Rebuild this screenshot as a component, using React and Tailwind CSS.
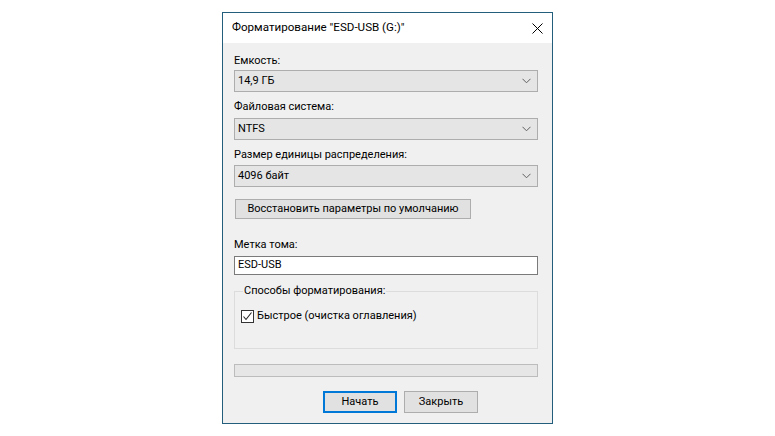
import React from "react";

const font = { fontFamily: 'Roboto, "Liberation Sans", Arial, sans-serif' };

function Chevron() {
  return (
    <svg width="9" height="6" viewBox="0 0 9 6" className="block">
      <path d="M0.5 0.8 L4.5 4.8 L8.5 0.8" fill="none" stroke="#606060" strokeWidth="1" />
    </svg>
  );
}

function Combo({ value }) {
  return (
    <div className="h-[22px] w-[304px] border border-[#adadad] bg-[#e5e5e5] flex items-center justify-between pl-[3px] pr-[6px] text-[11px] text-black">
      <span>{value}</span>
      <Chevron />
    </div>
  );
}

function Label({ children, className = "" }) {
  return <div className={"h-[16px] leading-[16px] text-[11px] text-black " + className}>{children}</div>;
}

export default function App() {
  return (
    <div className="w-[775px] h-[436px] bg-white flex items-center justify-center" style={font}>
      <div className="w-[331px] h-[412px] border border-[#235f7d] bg-[#f0f0f0] flex flex-col">
        <div className="h-[30px] bg-white flex items-center justify-between pl-[9px] pr-[9px] shrink-0">
          <span className="text-[11.6px] text-black">Форматирование "ESD-USB (G:)"</span>
          <svg width="11" height="11" viewBox="0 0 11 11" className="block">
            <path d="M0.5 0.5 L10.5 10.5 M10.5 0.5 L0.5 10.5" stroke="#000" strokeWidth="1" />
          </svg>
        </div>
        <div className="flex flex-col pl-[11px] pr-[14px]">
          <Label className="mt-[10px]">Емкость:</Label>
          <div className="mt-[1px]"><Combo value="14,9 ГБ" /></div>
          <Label className="mt-[7px]">Файловая система:</Label>
          <div className="mt-[3px]"><Combo value="NTFS" /></div>
          <Label className="mt-[7px]">Размер единицы распределения:</Label>
          <div className="mt-[2px]"><Combo value="4096 байт" /></div>
          <div className="mt-[12px] ml-[1px] h-[20px] w-[236px] border border-[#adadad] bg-[#e1e1e1] flex items-center justify-center text-[11px] text-black">
            Восстановить параметры по умолчанию
          </div>
          <Label className="mt-[18px]">Метка тома:</Label>
          <div className="mt-[3px] h-[19px] w-[304px] border border-[#7a7a7a] bg-white flex items-center pl-[3px] text-[11px] text-black">
            ESD-USB
          </div>
          <div className="relative mt-[16px] h-[58px] w-[304px] border border-[#dcdcdc]">
            <span className="absolute left-[8px] top-[-9px] bg-[#f0f0f0] px-[1px] leading-[16px] text-[11px] text-black">
              Способы форматирования:
            </span>
            <div className="absolute left-[6px] top-[16px] flex items-center gap-[3px]">
              <div className="w-[13px] h-[13px] border border-[#333333] bg-white flex items-center justify-center">
                <svg width="11" height="11" viewBox="0 0 11 11" className="block">
                  <path d="M1.5 5.5 L4 8.5 L9.5 1.5" fill="none" stroke="#222" strokeWidth="1.1" />
                </svg>
              </div>
              <span className="text-[11px] text-black leading-[16px]">Быстрое (очистка оглавления)</span>
            </div>
          </div>
          <div className="mt-[15px] h-[13px] w-[304px] border border-[#bcbcbc] bg-[#e6e6e6]" />
          <div className="mt-[14px] ml-[89px] flex gap-[7px]">
            <div className="h-[22px] w-[74px] border-2 border-[#0078d7] bg-[#e1e1e1] flex items-center justify-center text-[11px] text-black">
              Начать
            </div>
            <div className="h-[22px] w-[74px] border border-[#adadad] bg-[#e1e1e1] flex items-center justify-center text-[11px] text-black">
              Закрыть
            </div>
          </div>
        </div>
      </div>
    </div>
  );
}
